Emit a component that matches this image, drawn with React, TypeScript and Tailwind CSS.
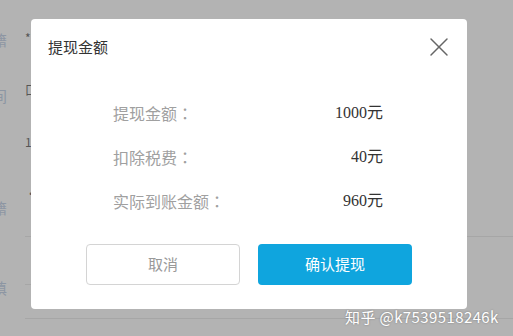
import { X } from "lucide-react";

const rows = [
  { label: "提现金额", value: "1000元" },
  { label: "扣除税费", value: "40元" },
  { label: "实际到账金额", value: "960元" },
];

export default function App() {
  return (
    <div
      className="relative w-[513px] h-[336px] overflow-hidden bg-[#b3b3b3]"
      style={{ fontFamily: '"Noto Sans CJK SC", "Noto Sans", sans-serif' }}
    >
      {/* page behind the overlay */}
      <div className="flex h-full">
        <div className="w-[9px] overflow-hidden flex flex-col pt-[30px] gap-[36px] text-[15px] leading-[20px] text-[#8d96a3]">
          <span className="-ml-[8px]">籍</span>
          <span className="-ml-[8px]">间</span>
          <span className="-ml-[8px]">，</span>
          <span className="-ml-[8px]">籍</span>
          <span className="-ml-[8px] mt-[24px]">填</span>
        </div>
        <div className="flex-1 ml-[16px] flex flex-col">
          <div className="h-[237px] border-b border-[#a6a6a6] flex flex-col pt-[30px] gap-[36px] text-[12px] leading-[16px] text-[#555]">
            <span>*</span>
            <span>口</span>
            <span>1</span>
            <span>·</span>
          </div>
          <div className="h-[48px] w-[6px] border-b border-[#a6a6a6]" />
          <div className="h-[34px] border-b border-[#a6a6a6]" />
        </div>
      </div>

      {/* modal */}
      <div className="absolute left-[31px] top-[19px] w-[436px] h-[290px] bg-white rounded-[4px] flex flex-col">
        <div className="h-[56px] flex items-center justify-between pl-[17px] pr-[12px]">
          <span className="text-[15px] text-[#333]">提现金额</span>
          <X className="w-[32px] h-[32px] text-[#666]" strokeWidth={1.1} />
        </div>
        <div className="pt-[16px] pl-[82px] pr-[84px] flex flex-col">
          {rows.map((r) => (
            <div key={r.label} className="h-[44px] flex items-center justify-between">
              <span className="text-[16px] text-[#a0a0a0]">
                {r.label}
                <span style={{ fontFamily: '"Noto Sans CJK JP", sans-serif' }}>：</span>
              </span>
              <span
                className="text-[16px] text-[#333]"
                style={{ fontFamily: '"Liberation Serif", "Noto Sans CJK SC", serif' }}
              >
                {r.value}
              </span>
            </div>
          ))}
        </div>
        <div className="mt-[21px] flex justify-center gap-[18px]">
          <button className="w-[154px] h-[41px] rounded-[4px] border border-[#d4d4d4] bg-white text-[15px] text-[#999]">
            取消
          </button>
          <button className="w-[154px] h-[41px] rounded-[4px] bg-[#0fa5de] text-[15px] text-white">
            确认提现
          </button>
        </div>
      </div>

      <div className="absolute left-[345px] top-[306px] text-[15px] tracking-[0.4px] text-white [text-shadow:0_0_2px_rgba(0,0,0,0.35)]">
        知乎 @k7539518246k
      </div>
    </div>
  );
}
